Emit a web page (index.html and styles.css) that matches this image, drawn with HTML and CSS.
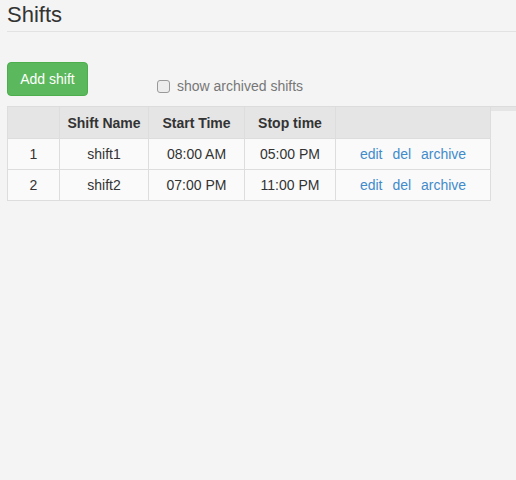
FILE: index.html
```html
<!DOCTYPE html>
<html>
<head>
<meta charset="utf-8">
<link rel="stylesheet" href="styles.css">
</head>
<body>
<div class="page">
  <h1 class="title">Shifts</h1>
  <div class="toolbar">
    <button class="btn-add">Add shift</button>
    <label class="archived"><input type="checkbox" class="check"><span>show archived shifts</span></label>
  </div>
  <div class="table-wrap">
    <table class="shifts">
      <colgroup>
        <col class="c1"><col class="c2"><col class="c3"><col class="c4"><col class="c5">
      </colgroup>
      <thead>
        <tr><th></th><th>Shift Name</th><th>Start Time</th><th>Stop time</th><th></th></tr>
      </thead>
      <tbody>
        <tr><td>1</td><td>shift1</td><td>08:00 AM</td><td>05:00 PM</td><td><a href="#">edit</a> <a href="#">del</a> <a href="#">archive</a></td></tr>
        <tr><td>2</td><td>shift2</td><td>07:00 PM</td><td>11:00 PM</td><td><a href="#">edit</a> <a href="#">del</a> <a href="#">archive</a></td></tr>
      </tbody>
    </table>
  </div>
</div>
</body>
</html>
```
FILE: styles.css
```css
html, body {
  margin: 0;
  padding: 0;
  background: #f4f4f4;
}
body {
  font-family: "Liberation Sans", Arial, sans-serif;
  font-size: 14px;
  color: #333;
  height: 480px;
}
.page {
  padding-left: 7px;
}
.title {
  margin: 3px 0 0 0;
  font-size: 22px;
  line-height: 24px;
  font-weight: normal;
  color: #333;
  padding-bottom: 4px;
  border-bottom: 1px solid #e2e2e2;
}
.toolbar {
  display: flex;
  align-items: flex-start;
  margin-top: 30px;
}
.btn-add {
  font-family: "Liberation Sans", Arial, sans-serif;
  font-size: 14px;
  line-height: 20px;
  padding: 6px 12px;
  width: 81px;
  height: 34px;
  color: #fff;
  background: #5cb85c;
  border: 1px solid #4cae4c;
  border-radius: 4px;
}
.archived {
  display: flex;
  align-items: center;
  margin-left: 69px;
  margin-top: 14px;
  line-height: 20px;
  color: #777;
}
.check {
  appearance: none;
  -webkit-appearance: none;
  width: 13px;
  height: 13px;
  margin: 0 7px 0 0;
  border: 1px solid #999;
  border-radius: 3px;
  background: #ececec;
}
.table-wrap {
  margin-top: 10px;
  border-top: 1px solid #dcdcdc;
  background: linear-gradient(#e5e5e5 0, #e5e5e5 4px, transparent 4px);
}
.shifts {
  border-collapse: collapse;
  table-layout: fixed;
  width: 484px;
}
.c1 { width: 52px; }
.c2 { width: 89px; }
.c3 { width: 96px; }
.c4 { width: 91px; }
.c5 { width: 155px; }
.shifts th, .shifts td {
  border: 1px solid #dddddd;
  padding: 5px 4px;
  line-height: 20px;
  text-align: center;
  white-space: nowrap;
}
.shifts th {
  padding-top: 6px;
  border-top: 0;
  background: #e5e5e5;
  font-weight: bold;
  color: #333;
}
.shifts td {
  background: #fafafa;
}
.shifts a {
  color: #428bca;
  text-decoration: none;
  padding: 0 3px;
}
```
